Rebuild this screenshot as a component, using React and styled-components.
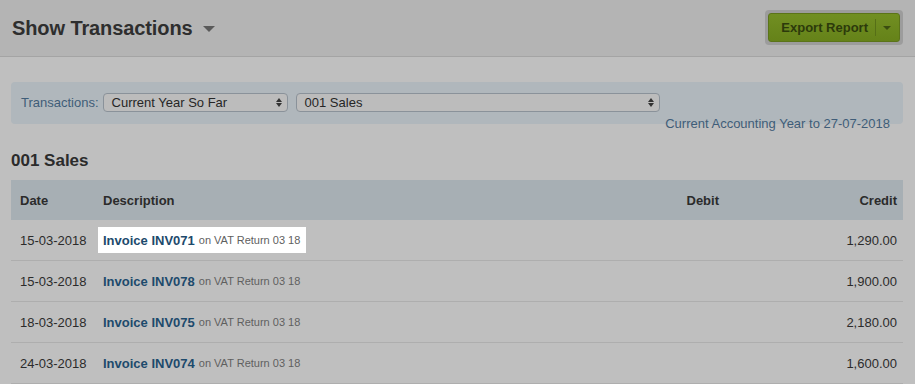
import styled, { createGlobalStyle } from 'styled-components';

const GlobalStyle = createGlobalStyle`
  html, body {
    margin: 0;
    padding: 0;
    background: #bfbfbf;
    font-family: 'Liberation Sans', Arial, sans-serif;
    color: #2b2b2b;
  }
`;

const Page = styled.div`
  width: 915px;
  height: 384px;
  overflow: hidden;
  background: #bfbfbf;
`;

const Header = styled.div`
  height: 57px;
  box-sizing: border-box;
  display: flex;
  align-items: center;
  justify-content: space-between;
  padding: 0 12px;
  background: #b4b4b4;
  border-bottom: 1px solid #a4a4a4;
`;

const Title = styled.h1`
  margin: 0;
  font-size: 20px;
  font-weight: bold;
  color: #2e2e2e;
  display: flex;
  align-items: center;
  gap: 10px;
  letter-spacing: -0.1px;
`;

const Caret = styled.span`
  width: 0;
  height: 0;
  border-left: ${(p) => p.size}px solid transparent;
  border-right: ${(p) => p.size}px solid transparent;
  border-top: ${(p) => p.size}px solid ${(p) => p.color};
  margin-top: 2px;
`;

const ButtonHalo = styled.div`
  padding: 3px;
  background: #9c9c9c;
  border-radius: 4px;
  margin-bottom: 2px;
`;

const ExportButton = styled.button`
  display: flex;
  align-items: center;
  height: 29px;
  padding: 0 0 0 12px;
  border: 1px solid #5b7419;
  border-radius: 3px;
  background: linear-gradient(#718f22, #658219);
  font-family: inherit;
  font-size: 13px;
  font-weight: bold;
  color: #2c3a0b;
  cursor: pointer;
`;

const ButtonLabel = styled.span`
  padding-right: 7px;
`;

const ButtonSplit = styled.span`
  height: 100%;
  display: flex;
  align-items: center;
  padding: 0 8px 0 8px;
  position: relative;
  &::before {
    content: '';
    position: absolute;
    left: 0;
    top: 5px;
    bottom: 5px;
    border-left: 1px solid #566f17;
  }
`;

const Content = styled.div`
  padding: 25px 12px 0 11px;
`;

const FilterPanel = styled.div`
  background: #b0b7bc;
  border-radius: 4px;
  padding: 11px 10px 0 10px;
  height: 31px;
`;

const FilterRow = styled.div`
  display: flex;
  align-items: center;
  gap: 4px;
`;

const FilterLabel = styled.label`
  font-size: 13px;
  color: #3f5d78;
`;

const Select = styled.div`
  width: ${(p) => p.width}px;
  height: 19px;
  box-sizing: border-box;
  border: 1px solid #8a929a;
  border-radius: 4px;
  background: #bcbcbc;
  display: flex;
  align-items: center;
  justify-content: space-between;
  padding: 0 5px 0 8px;
  font-size: 13px;
  color: #262626;
  margin-right: ${(p) => p.gap || 0}px;
`;

const Arrows = styled.span`
  display: flex;
  flex-direction: column;
  gap: 1px;
`;

const Arrow = styled.span`
  width: 0;
  height: 0;
  border-left: 3px solid transparent;
  border-right: 3px solid transparent;
  ${(p) => (p.up ? 'border-bottom' : 'border-top')}: 4px solid #333;
`;

const PeriodNote = styled.div`
  text-align: right;
  font-size: 13px;
  color: #3f5d78;
  padding-right: 3px;
  margin-top: 4px;
`;

const SectionTitle = styled.h2`
  margin: 27px 0 0 0;
  height: 29px;
  line-height: 20px;
  font-size: 17px;
  font-weight: bold;
  color: #2b2b2b;
`;

const Table = styled.table`
  width: 892px;
  border-collapse: collapse;
  font-size: 13px;
`;

const HeadCell = styled.th`
  background: #a7afb4;
  height: 40px;
  padding: 0 ${(p) => (p.pr != null ? p.pr : 8)}px 0 ${(p) => (p.pl != null ? p.pl : 9)}px;
  text-align: ${(p) => p.align || 'left'};
  font-weight: bold;
  color: #2b2b2b;
`;

const Cell = styled.td`
  height: 40px;
  border-bottom: 1px solid #aeaeae;
  padding: 0 ${(p) => (p.pr != null ? p.pr : 8)}px 0 ${(p) => (p.pl != null ? p.pl : 9)}px;
  text-align: ${(p) => p.align || 'left'};
  color: #2b2b2b;
`;

const Highlight = styled.span`
  display: inline-flex;
  align-items: center;
  height: 26px;
  padding: 0 6px 0 5px;
  margin-left: -5px;
  background: ${(p) => (p.on ? '#ffffff' : 'transparent')};
`;

const InvoiceLink = styled.a`
  font-weight: bold;
  color: #1d4a6c;
  text-decoration: none;
  margin-right: 4px;
`;

const Note = styled.span`
  font-size: 11px;
  color: #5f5f5f;
`;

const rows = [
  { date: '15-03-2018', inv: 'INV071', credit: '1,290.00', highlight: true },
  { date: '15-03-2018', inv: 'INV078', credit: '1,900.00' },
  { date: '18-03-2018', inv: 'INV075', credit: '2,180.00' },
  { date: '24-03-2018', inv: 'INV074', credit: '1,600.00' },
];

export default function App() {
  return (
    <Page>
      <GlobalStyle />
      <Header>
        <Title>
          Show Transactions <Caret size={6} color="#5a5a5a" />
        </Title>
        <ButtonHalo>
          <ExportButton>
            <ButtonLabel>Export Report</ButtonLabel>
            <ButtonSplit>
              <Caret size={4} color="#3b4d10" />
            </ButtonSplit>
          </ExportButton>
        </ButtonHalo>
      </Header>
      <Content>
        <FilterPanel>
          <FilterRow>
            <FilterLabel>Transactions:</FilterLabel>
            <Select width={185} gap={4}>
              Current Year So Far
              <Arrows>
                <Arrow up />
                <Arrow />
              </Arrows>
            </Select>
            <Select width={364}>
              001 Sales
              <Arrows>
                <Arrow up />
                <Arrow />
              </Arrows>
            </Select>
          </FilterRow>
          <PeriodNote>Current Accounting Year to 27-07-2018</PeriodNote>
        </FilterPanel>
        <SectionTitle>001 Sales</SectionTitle>
        <Table>
          <thead>
            <tr>
              <HeadCell style={{ width: 75 }}>Date</HeadCell>
              <HeadCell pl={0}>Description</HeadCell>
              <HeadCell align="right" pr={0}>Debit</HeadCell>
              <HeadCell align="right" pl={0} pr={6} style={{ width: 178 }}>Credit</HeadCell>
            </tr>
          </thead>
          <tbody>
            {rows.map((r) => (
              <tr key={r.inv}>
                <Cell>{r.date}</Cell>
                <Cell pl={0}>
                  <Highlight on={r.highlight ? 1 : 0}>
                    <InvoiceLink href="#">Invoice {r.inv}</InvoiceLink>
                    <Note>on VAT Return 03 18</Note>
                  </Highlight>
                </Cell>
                <Cell align="right" pr={0} />
                <Cell align="right" pl={0} pr={6}>{r.credit}</Cell>
              </tr>
            ))}
          </tbody>
        </Table>
      </Content>
    </Page>
  );
}
